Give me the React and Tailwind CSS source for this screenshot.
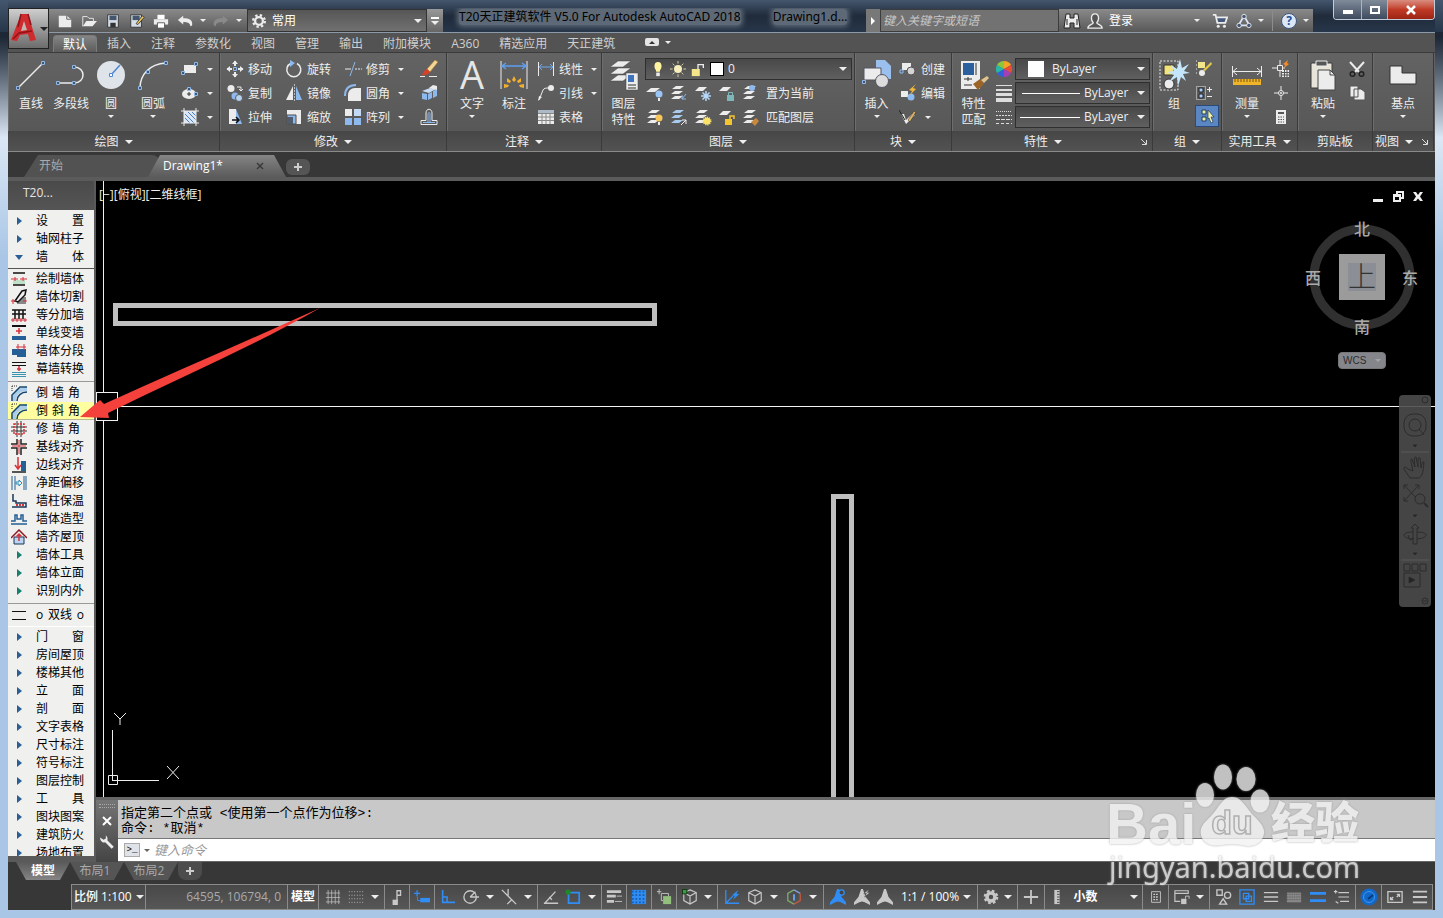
import clsx from 'clsx'

const B = '#8db9ee'
const W = '#ececec'

/* ---------- 18px ribbon icons ---------- */
const small = {
  rect: (
    <>
      <path d="M3 5h12v8H3z" fill={W} />
      <path d="M.5 11.500h3v3h-3zM13.500 2.500h3v3h-3z" fill="#44566e" stroke={B} />
    </>
  ),
  ellipse: (
    <>
      <ellipse cx="8" cy="10" rx="7" ry="5" fill={W} />
      <path d="M6 10h4M8 8v4" stroke="#333" />
      <path d="M6.500 3.500h3v3h-3zM13.500 8.500h3v3h-3z" fill="#44566e" stroke={B} />
    </>
  ),
  hatch: (
    <>
      <path d="M3 3h12v12H3z" fill="#dbe7f6" />
      <path d="m4 10 6 6M4 6l9 9M7 4l8 8M11 4l4 4" stroke="#4b7fc4" />
      <path d="M3 0v18M15 0v18M0 3h18M0 15h18" stroke={W} />
    </>
  ),
  move: (
    <>
      <path d="M9 1v5M9 12v5M1 9h5M12 9h5" stroke={W} strokeWidth="2" />
      <path d="m6 4 3-3.500L12 4zM6 14l3 3.500 3-3.500zM4 6 .5 9 4 12zM14 6l3.500 3-3.500 3z" fill={W} />
      <path d="M7.500 7.500h3v3h-3z" stroke={B} fill="none" />
    </>
  ),
  copy: (
    <>
      <circle cx="5" cy="4.500" r="3.500" fill={W} />
      <path d="M11 3h4v3m-2-1 2 2 2-2" stroke={W} fill="none" />
      <circle cx="9" cy="12" r="3.500" fill={B} />
      <circle cx="13" cy="14" r="3.500" fill="#b8d2f0" stroke="#5c5c5c" />
    </>
  ),
  stretch: (
    <>
      <path d="M3 1h7v15H3z" fill={W} />
      <path d="m10 1 6 15h-6z" fill={B} />
      <path d="M6 12h7m-3-3 3 3-3 3" stroke="#111" strokeWidth="1.500" fill="none" />
    </>
  ),
  rotate: (
    <>
      <path d="M12 3.500a7 7 0 1 1-6-.2" stroke={W} strokeWidth="1.500" fill="none" />
      <path d="m5 0 5 3-5 4z" fill={B} />
    </>
  ),
  mirror: (
    <>
      <path d="M8 2v14H1z" fill={W} />
      <path d="M11 2v14h6z" fill={B} />
      <path d="M9.500 0v18" stroke="#bbb" strokeDasharray="2 1" />
    </>
  ),
  scale: (
    <>
      <path d="M2 2h14v14H2z" fill={W} />
      <path d="M2 7h9v9H2z" fill={B} stroke="#4d4d4d" />
      <path d="M2 9h6v7H2z" fill="#505c6b" />
    </>
  ),
  trim: (
    <>
      <path d="M1 9h6" stroke={W} />
      <path d="M11 9h7" stroke={W} strokeDasharray="2 1" />
      <path d="m11 2-5 14" stroke={B} />
    </>
  ),
  fillet: (
    <>
      <path d="M4 17V11c0-4 3-7 7-7h6v13z" fill={W} />
      <path d="M1 12C1 5 5 1 12 1" stroke={B} strokeWidth="2" fill="none" />
    </>
  ),
  array: (
    <>
      <path d="M1 1h7v7H1zM1 10h7v7H1zM10 10h7v7h-7z" fill={B} />
      <path d="M1 1h7v7H1z" fill={W} />
      <path d="M10 1h7v7h-7z" fill="#c3d9f4" />
    </>
  ),
  erase: (
    <>
      <path d="M0 16.500h5M9 16.500h8" stroke={W} />
      <path d="m7 9 8-9 3 2-8 10z" fill="#f3d79a" stroke="#b07a2a" strokeWidth=".7" />
      <path d="M7 9c-3 1-4 4-5 6 3 1 7-1 8-3z" fill="#d8402c" />
    </>
  ),
  explode: (
    <>
      <path d="m2 7 8-3 6 1-7 4z" fill="#c9dcf3" />
      <path d="m2 9 5 1v6l-5-1zM8 10l4-2v6l-4 2zM13 7l4-2v7l-4 2z" fill={B} />
      <path d="m9 4 4-3 4 1v4z" fill={W} />
    </>
  ),
  offset: (
    <>
      <path d="M1 16.500h16v-4h-5V5c0-5-6-5-6 0v7.500H1z" fill="none" stroke={W} />
      <path d="M3 14.500h12M8 14V6c0-2 2-2 2 0v8" fill="none" stroke={B} />
    </>
  ),
  linear: (
    <>
      <path d="M1.500 2v14M16.500 2v14" stroke={W} />
      <path d="M2 7h14M5 4 2 7l3 3M13 4l3 3-3 3" stroke="#6fa8f0" fill="none" />
    </>
  ),
  leader: (
    <>
      <path d="M2 16 6 6c1-2 3-2 6-2" stroke={W} fill="none" />
      <path d="m1 17 1-5 3 1z" fill={W} />
      <circle cx="14" cy="4" r="3" fill={W} />
    </>
  ),
  table: (
    <>
      <path d="M1 2h16v14H1z" fill={W} />
      <path d="M1 2h16v3H1z" fill="#aeb9c8" />
      <path d="M1 5.500h16M1 9h16M1 12.500h16M5 5v11M9 5v11M13 5v11" stroke="#888" />
    </>
  ),
  binoc: <path d="M3 2h4v4h4V2h4l2 14h-6v-5H7v5H1zM4 7v6m10-6v6" fill={W} stroke="#222" />,
  create: (
    <>
      <path d="M3 3h9v7H3z" fill={W} />
      <circle cx="12" cy="11" r="4" fill="#d5d5d5" stroke="#555" />
      <path d="M1 10h3v3H1z" fill="none" stroke={B} />
    </>
  ),
  edit: (
    <>
      <path d="M2 7h7v6H2z" fill={W} />
      <circle cx="12" cy="13" r="3.500" fill={B} />
      <path d="m17 0-7 6 3 1-2 4 6-6-3-1z" fill="#f0b63a" />
    </>
  ),
  attr: (
    <>
      <path d="m2 6 5 10 9-9-3-1-6 6-2-6z" fill={W} />
      <path d="m0 2 6 10" stroke="#222" />
      <path d="m9 12 6-9 2 1-6 10z" fill="#e2b365" stroke="#222" strokeWidth=".5" />
    </>
  ),
  wheel: (
    <>
      <path d="M9 9V1a8 8 0 0 1 7 4z" fill="#f5a623" />
      <path d="M9 9 16 5a8 8 0 0 1 0 8z" fill="#e94b35" />
      <path d="m9 9 7 4a8 8 0 0 1-7 4z" fill="#a340b8" />
      <path d="M9 9v8a8 8 0 0 1-7-4z" fill="#2f62d9" />
      <path d="m9 9-7 4a8 8 0 0 1 0-8z" fill="#29b6a5" />
      <path d="M9 9 2 5a8 8 0 0 1 7-4z" fill="#8cc63e" />
    </>
  ),
  weights: <path d="M1 1h16v1H1zM1 5h16v2H1zM1 9h16v3H1zM1 14h16v4H1z" fill="#ddd" />,
  types: (
    <g stroke="#ddd">
      <path d="M1 3.500h16" strokeDasharray="1 1" />
      <path d="M1 7.500h16" strokeDasharray="2 1" />
      <path d="M1 11.500h16" strokeDasharray="4 1" />
      <path d="M1 15.500h16" strokeDasharray="3 2" />
    </g>
  ),
  groupEdit: (
    <>
      <path d="M3 2h7v6H3z" fill="#f2e68a" />
      <circle cx="7" cy="13" r="3" fill={W} />
      <path d="m8 10 8-8 1 2-7 7z" fill="#e6c94a" />
      <path d="M1 1h1M1 5h1M1 9h1M1 13h1" stroke={W} />
    </>
  ),
  groupAdd: (
    <>
      <path d="M1.500 2.500h9v13h-9z" fill="none" stroke={W} strokeDasharray="1 1" />
      <path d="M4 4h4v4H4zM4 10h4v4H4z" fill="#a8ccf6" stroke="#222" />
      <path d="M12 5.500h5m-2.500-2.500v5M12 12.500h5" stroke={W} />
    </>
  ),
  groupSel: (
    <>
      <path d="M4 3h4v4H4zM4 10h4v4H4z" fill="#e8f2a0" stroke="#1f3b5c" />
      <path d="m10 3 6 7h-3l2 5-2 1-2-5-1 1z" fill="#f5f5a8" stroke="#1f3b5c" strokeWidth=".7" />
    </>
  ),
  quick: (
    <>
      <path d="M5.500 5.500h5v5h-5zM8 0v5m0 6v6M0 8h5m6 0h2" stroke={W} fill="none" />
      <path d="m16 0-5 4 2 1-1 3 5-4-2-1z" fill="#f28c28" />
      <path d="M10 10h7v7h-7z" fill={W} />
      <path d="M10 12.500h7M10 15h7M12.500 10v7M15 10v7" stroke="#555" />
    </>
  ),
  point: (
    <>
      <path d="M9 2v14M2 9h14" stroke={W} />
      <circle cx="9" cy="9" r="2.500" fill="#5c5c5c" stroke={W} />
      <circle cx="9" cy="9" r="1" fill={W} />
    </>
  ),
  calc: (
    <>
      <path d="M4 2h10v14H4z" fill={W} />
      <path d="M6 4h6v2H6z" fill="#555" />
      <path d="M6 9h6M6 11.500h6M6 14h6" stroke="#555" strokeDasharray="1.500 1" />
    </>
  ),
  cut: (
    <>
      <path d="m2 2 9 10M16 2 7 12" stroke={W} strokeWidth="2" />
      <circle cx="4.500" cy="14" r="2.300" stroke="#222" strokeWidth="1.500" fill="none" />
      <circle cx="13.500" cy="14" r="2.300" stroke="#222" strokeWidth="1.500" fill="none" />
    </>
  ),
  copyClip: <path d="M2 2h8v11H2zM6 5h7l4 3v8H6z" fill={W} stroke="#555" />,
}

const stack = 'M6 2h8l-4 3H2zM5 7h8l-4 3H1zM5 12h8l-4 3H1z'
const layerIcons = [
  [
    <><path d="M5 4h9l-5 4H0z" fill={W} /><circle cx="13" cy="10" r="3.500" fill="#9ac6f5" /><path d="M12 14h2v3h-2z" fill={W} /></>,
    <><path d={stack} fill={W} /><path d="m16 10-4 5m0-4v4h4" stroke={B} fill="none" /></>,
    <><path d="M5 3h8l-4 4H1z" fill={W} /><path d="M12 7v10M7 12h10M8.500 8.500l7 7m0-7-7 7" stroke="#b5d8fa" strokeWidth="1.500" /></>,
    <><path d="M5 3h8l-4 4H1z" fill={W} /><path d="M9 11h7v6H9z" fill="#7fb6b8" /><path d="M10.500 11V8.500h4V11" stroke="#7fb6b8" fill="none" /></>,
    <><path d={stack} fill={W} /><circle cx="10" cy="4" r="3" fill={B} /></>,
  ],
  [
    <><path d={stack} fill={W} /><circle cx="13" cy="10" r="3.500" fill="#f7c65a" /><path d="M12 14h2v3h-2z" fill={W} /></>,
    <><path d={stack} fill="#a9caef" /><path d="m11 17 5-5m-4 0h4v4" stroke={W} fill="none" /></>,
    <><path d={stack} fill={W} /><circle cx="13" cy="13" r="3.500" fill="#fbe36a" stroke="#fbe36a" strokeDasharray="1 1" strokeWidth="2" /></>,
    <><path d="M5 3h8l-4 4H1z" fill={W} /><path d="M7 11h7v6H7z" fill="#f5c530" /><path d="M12 11V8h4v3" stroke="#f5c530" strokeWidth="1.500" fill="none" /></>,
    <><path d={stack} fill={W} /><path d="m9 14 5-4 3 3-4 5z" fill="#c8893f" /></>,
  ],
]

/* ---------- 32px ribbon icons ---------- */
const node = (x, y) => <path d={`M${x - 1.5} ${y - 1.5}h3v3h-3z`} fill="#44566e" stroke={B} />
const big = {
  line: <><path d="M3 29 28 4" stroke={W} strokeWidth="1.500" />{node(3, 29)}{node(28, 4)}</>,
  pline: <><path d="M3 24h16c12 0 12-16 0-16" stroke={W} strokeWidth="1.500" fill="none" />{node(3, 24)}{node(19, 24)}{node(19, 8)}</>,
  circle: (
    <>
      <circle cx="16" cy="16" r="14" fill="#dfe4ea" />
      <path d="m16 16 9-10" stroke="#4e86cf" strokeWidth="1.500" />
      <path d="M14.500 14.500h3v3h-3z" fill="#fff" stroke="#4e86cf" />
    </>
  ),
  arc: <><path d="M3 29C3 16 12 5 29 4" stroke={W} strokeWidth="1.500" fill="none" />{node(3, 29)}{node(11, 13)}{node(29, 4)}</>,
  text: <text x="16" y="30" fontSize="38" textAnchor="middle" fill="#e6e6e6" className="font-['Open_Sans',sans-serif]">A</text>,
  dim: (
    <>
      <path d="M3 2v28M29 2v28" stroke={W} />
      <path d="M4 7h24M8 4 4 7l4 3M24 4l4 3-4 3" stroke="#5f9df0" strokeWidth="1.500" fill="none" />
      <g fill="#f3b02e">
        <path d="m16 17 2 4-2 2-2-2zM9 19l4 3-1 2-3-1zM23 19l-4 3 1 2 3-1zM6 25l5 1-1 2-4 1zM26 25l-5 1 1 2 4 1z" />
      </g>
    </>
  ),
  layers: (
    <>
      <path d="M10 2h13l-8 6H2zM10 9h13l-8 6H2zM10 16h13l-8 6H2z" fill={W} stroke="#444" strokeWidth=".5" />
      <path d="M18 14h12v17H18z" fill={W} stroke="#444" strokeWidth=".5" />
      <path d="M20 16h6v7h-6z" fill="#3f73bd" />
      <path d="M20 26h8M20 29h8" stroke="#333" />
    </>
  ),
  insert: (
    <>
      <path d="M15 1h9l6 6v13H15z" fill="#9bc0ee" />
      <path d="M3 9h17v12H3z" fill={W} stroke="#556" />
      <circle cx="21" cy="22" r="6.500" fill="#dcdcdc" stroke="#556" />
      {node(3, 23)}
    </>
  ),
  match: (
    <>
      <path d="M3 2h19v28H3z" fill={W} />
      <path d="M5 4h11v12H5z" fill="#2c5f9e" />
      <path d="M18 4v12M6 20h8M6 26h8M10 18v4" stroke="#333" />
      <path d="m15 25 7-5 4 5-6 6z" fill="#9b6428" />
      <path d="m23 21 6-4 2 2-5 5z" fill="#e3c48e" />
    </>
  ),
  group: (
    <>
      <path d="M2 2h18v29H2z" fill="none" stroke={W} strokeDasharray="2 1.500" />
      <path d="M6 6h10v10H6z" fill="#f3e37a" stroke="#333" />
      <circle cx="11" cy="25" r="5" fill={W} stroke="#333" />
      <path d="m22 0 2 9 7-4-5 7 6 2-7 1 3 7-5-4-3 9-1-9-8 5 5-7-7-3 7-1-3-6 6 4z" fill="#c4e6fb" />
    </>
  ),
  measure: (
    <>
      <path d="M1.500 7v11M30.500 7v11M2 12.500h28M6 9l-4 3.500L6 16M26 9l4 3.500-4 3.500" stroke={W} fill="none" />
      <path d="M2 20h28v6H2z" fill="#f0b429" />
      <path d="M4 20v3M7 20v3M10 20v3M13 20v3M16 20v3M19 20v3M22 20v3M25 20v3M28 20v3" stroke="#7a5310" />
    </>
  ),
  paste: (
    <>
      <path d="M4 4h21v25H4z" fill="#e9e4da" stroke="#3b3b3b" />
      <path d="M9 2h11v5H9z" fill="#555" stroke={W} />
      <path d="M11 11h12l5 5v15H11z" fill={W} stroke="#444" />
      <path d="M23 11v5h5" fill="none" stroke="#444" />
    </>
  ),
  base: <path d="M3 7h12v7h14v11H3z" fill={W} stroke="#333" />,
}

function Svg({ size = 18, box = size, className, children }) {
  return (
    <svg width={size} height={size} viewBox={`0 0 ${box} ${box}`} className={clsx('shrink-0', className)} aria-hidden="true">
      {children}
    </svg>
  )
}

function Caret({ sm }) {
  return (
    <i
      className={clsx(
        'inline-block h-0 w-0 shrink-0 border-x-transparent border-t-[#eee]',
        sm ? 'border-x-[3px] border-t-[3px]' : 'border-x-4 border-t-4'
      )}
    />
  )
}

function Big({ icon, label, second, arrow, width = 'w-10' }) {
  return (
    <button className={clsx('flex shrink-0 flex-col items-center pt-0.5 leading-4', width)}>
      <Svg size={32}>{big[icon]}</Svg>
      <span className="mt-[5px] whitespace-nowrap">{label}</span>
      {second && <span>{second}</span>}
      {arrow && <span className="flex h-2 items-center"><Caret sm /></span>}
    </button>
  )
}

function Small({ icon, label, arrow, name, active }) {
  return (
    <button
      aria-label={label || name}
      className={clsx(
        'flex items-center gap-1 whitespace-nowrap',
        active ? 'h-[22px] w-6 justify-center border border-[#2a4b7a] bg-[#5b86c4]' : 'h-6'
      )}
    >
      <Svg>{small[icon]}</Svg>
      {label && <span className="pt-px">{label}</span>}
      {arrow && <span className="ml-1 flex"><Caret sm /></span>}
    </button>
  )
}

function Panel({ title, width, arrow = true, corner, children }) {
  return (
    <section className={clsx('flex flex-col border-r border-[#3a3a3a] shadow-[inset_1px_0_0_#6d6d6d]', width)}>
      <div className="flex h-[78px] pt-1">{children}</div>
      <div className="flex h-5 items-center justify-center gap-1.5 bg-linear-to-b from-[#474747] to-[#525252] pt-px">
        <span className={corner ? 'ml-auto' : ''}>{title}</span>
        {arrow && <Caret />}
        {corner && (
          <Svg size={8} className="mr-1 ml-auto">
            <path d="m1 1 5 5M6.500 2v4.500H2" stroke="#ddd" fill="none" />
          </Svg>
        )}
      </div>
    </section>
  )
}

function Combo({ label, value, children, pad }) {
  return (
    <label className="flex h-[22px] items-center gap-1 border border-[#2f2f2f] bg-linear-to-b from-[#484848] to-[#606060] px-1">
      {children}
      <select aria-label={label} className={clsx('min-w-0 flex-1 appearance-none bg-transparent outline-none', pad)}>
        <option>{value}</option>
      </select>
      <Caret />
    </label>
  )
}

/* ---------- title bar ---------- */
const quickAccess = [
  ['新建', <><path d="M2 3h9l5 4v9H2z" fill={W} /><path d="M11 3v4h5" stroke="#555" fill="none" /></>],
  ['打开', <><path d="M2 15V4h5l2 2h5v3" stroke={W} fill="none" /><path d="M2 15 6 9h12l-5 6z" fill={W} /></>],
  ['保存', <><path d="M3 2h12v14H3z" fill="#d5dde6" stroke="#333" /><path d="M5 3h8v5H5z" fill="#43566d" /><path d="M6 11h6v5H6z" fill="#333" /></>],
  ['另存为', <><path d="M2 2h12v14H2z" fill="#d5dde6" stroke="#333" /><path d="M4 3h8v5H4z" fill="#43566d" /><path d="m8 12 7-9 2 2-7 8z" fill="#f0c65b" stroke="#333" /></>],
  ['打印', <><path d="M5 2h8v5H5z" fill="#fff" /><path d="M1 7h16v6H1z" fill={W} /><path d="M5 11h8v6H5z" fill="#fff" stroke="#555" /></>],
  ['放弃', <path d="M7 3 1 8l6 5v-3c5 0 8 1 8 5l2-1c1-6-3-8-10-8z" fill={W} />],
  ['重做', <path d="m11 3 6 5-6 5v-3c-5 0-8 1-8 5l-2-1c-1-6 3-8 10-8z" fill="#8a8a8a" />],
]

function TitleBar() {
  return (
    <header className="flex h-8 shrink-0 items-end bg-linear-to-b from-[#44576e] via-[#202b3b] to-[#27364a] pl-[41px] text-white">
      <div className="flex h-[23px] w-[198px] items-center bg-linear-to-b from-[#8a8a8a] to-[#585858] pl-1">
        {quickAccess.map(([name, art], i) => (
          <span key={name} className="flex items-center">
            <button aria-label={name} className="flex w-6 justify-center"><Svg size={16} box={18}>{art}</Svg></button>
            {i > 4 && <span className="flex w-3 justify-center"><Caret sm /></span>}
          </span>
        ))}
      </div>
      <label className="flex h-[23px] w-[180px] items-center gap-1.5 border border-[#333] bg-linear-to-b from-[#565656] to-[#717171] px-1">
        <Svg size={14} box={18}>
          <circle cx="9" cy="9" r="5" fill="none" stroke={W} strokeWidth="3" />
          <circle cx="9" cy="9" r="7.500" fill="none" stroke={W} strokeWidth="3" strokeDasharray="3 2.900" />
        </Svg>
        <select aria-label="工作空间" className="min-w-0 flex-1 appearance-none bg-transparent outline-none">
          <option>常用</option>
        </select>
        <Caret />
      </label>
      <button aria-label="自定义" className="flex h-[23px] w-4 flex-col items-center justify-center gap-0.5 bg-linear-to-b from-[#999] to-[#666]">
        <i className="h-0.5 w-2 bg-white" />
        <Caret />
      </button>
      <h1 className="flex h-6 min-w-0 flex-1 items-start gap-8 overflow-hidden pt-px pl-4 font-['Noto_Sans','Noto_Sans_CJK_SC',sans-serif] whitespace-nowrap text-black">
        <span className="rounded bg-[#5d6976] leading-4 shadow-[0_0_5px_2px_#5d6976]">T20天正建筑软件 V5.0 For Autodesk AutoCAD 2018</span>
        <span className="rounded bg-[#5d6976] leading-4 shadow-[0_0_5px_2px_#5d6976]">Drawing1.d...</span>
      </h1>
      <button aria-label="展开" className="flex h-[23px] w-3.5 items-center justify-center bg-[#787878]">
        <i className="border-y-4 border-l-4 border-y-transparent border-l-white" />
      </button>
      <input
        aria-label="搜索"
        placeholder="键入关键字或短语"
        className="h-[23px] w-[179px] border border-[#3c3c3c] bg-[#727272] px-0.5 italic outline-none placeholder:text-[#c8c8c8]"
      />
      <div className="flex h-[23px] w-[254px] items-center bg-linear-to-b from-[#8a8a8a] to-[#585858] pl-1">
        <button aria-label="查找"><Svg size={18}>{small.binoc}</Svg></button>
        <button className="ml-1.5 flex items-center gap-1.5">
          <Svg size={16} box={18}>
            <path d="M9 1c3 0 4 2 4 5 0 2-1 4-2 5 0 2 6 2 6 6H1c0-4 6-4 6-6-1-1-2-3-2-5 0-3 1-5 4-5z" fill="#555" stroke={W} strokeWidth="1.500" />
          </Svg>
          登录
        </button>
        <span className="ml-auto flex"><Caret sm /></span>
        <button aria-label="商店" className="ml-3">
          <Svg size={16} box={18}>
            <path d="M1 2h3l2 9h9l2-6H5" stroke={W} strokeWidth="2" fill="#46597a" />
            <circle cx="7" cy="15" r="1.700" fill={W} /><circle cx="14" cy="15" r="1.700" fill={W} />
          </Svg>
        </button>
        <button aria-label="应用" className="ml-2 flex items-center gap-1.5">
          <Svg size={16} box={18}>
            <path d="M9 3 3 14h12z" fill="none" stroke="#dbe5f5" strokeWidth="2" />
            <circle cx="9" cy="4" r="2.500" fill="#46597a" stroke={W} /><circle cx="3.500" cy="14" r="2.500" fill="#46597a" stroke={W} /><circle cx="14.500" cy="14" r="2.500" fill="#46597a" stroke={W} />
          </Svg>
          <Caret sm />
        </button>
        <i className="mx-2 h-5 w-px bg-[#8d8d8d]" />
        <button aria-label="帮助" className="mr-1 flex items-center gap-1.5">
          <span className="flex size-4 items-center justify-center rounded-full border border-[#3d567d] bg-[#dce7f5] text-[12px] leading-3 font-bold text-[#23529a]">?</span>
          <Caret sm />
        </button>
      </div>
      <div className="mb-3 ml-5 flex h-5 shrink-0 overflow-hidden rounded-b border border-t-0 border-[#c3ccd8] text-white">
        <button aria-label="最小化" className="flex w-7 items-center justify-center border-r border-[#aab4c2] bg-linear-to-b from-[#808b9a] to-[#3e4b5e]"><i className="mt-1 h-1 w-2.5 bg-white" /></button>
        <button aria-label="还原" className="flex w-[26px] items-center justify-center border-r border-[#aab4c2] bg-linear-to-b from-[#808b9a] to-[#3e4b5e]"><i className="h-2 w-2.5 border-2 border-white" /></button>
        <button aria-label="关闭" className="flex w-[46px] items-center justify-center bg-linear-to-b from-[#d98c80] via-[#c03a25] to-[#9c2314]">
          <Svg size={10}><path d="m1 1 8 8M9 1 1 9" stroke="#fff" strokeWidth="2.500" /></Svg>
        </button>
      </div>
    </header>
  )
}

const tabs = ['默认', '插入', '注释', '参数化', '视图', '管理', '输出', '附加模块', 'A360', '精选应用', '天正建筑']

function RibbonTabs() {
  return (
    <nav className="flex h-[21px] shrink-0 items-end border-t border-b border-t-[#8c99a8] border-b-[#3b3b3b] bg-[#535353] pl-[45px] text-[#cfcfcf]">
      {tabs.map((t, i) => (
        <button
          key={t}
          className={clsx('h-[17px]', i === 0 ? 'rounded-t-sm border border-b-0 border-[#7b7b7b] bg-linear-to-b from-[#858585] to-[#5c5c5c] px-[9px] leading-[15px] text-white' : 'px-2.5 leading-4')}
        >
          {t}
        </button>
      ))}
      <button aria-label="折叠功能区" className="mb-1.5 ml-5 flex items-center gap-1.5">
        <span className="flex h-2 w-3.5 items-center justify-center rounded-xs bg-[#e5e5e5]"><i className="border-x-[3px] border-b-[3px] border-x-transparent border-b-[#333]" /></span>
        <Caret sm />
      </button>
    </nav>
  )
}

function Ribbon() {
  return (
    <div className="flex h-[99px] shrink-0 overflow-hidden border-b border-[#8a8a8a] bg-linear-to-b from-[#636363] to-[#555] text-[#eee] [&>section]:shrink-0">
      <Panel title="绘图" width="w-[212px]">
        <div className="flex pl-[3px]">
          <Big icon="line" label="直线" />
          <Big icon="pline" label="多段线" />
          <Big icon="circle" label="圆" arrow />
          <Big icon="arc" label="圆弧" arrow width="w-11" />
        </div>
        <div className="ml-1.5">
          <Small icon="rect" name="矩形" arrow />
          <Small icon="ellipse" name="椭圆" arrow />
          <Small icon="hatch" name="图案填充" arrow />
        </div>
      </Panel>
      <Panel title="修改" width="w-[227px]">
        <div className="w-[65px] pl-1.5">
          <Small icon="move" label="移动" />
          <Small icon="copy" label="复制" />
          <Small icon="stretch" label="拉伸" />
        </div>
        <div className="w-[59px]">
          <Small icon="rotate" label="旋转" />
          <Small icon="mirror" label="镜像" />
          <Small icon="scale" label="缩放" />
        </div>
        <div className="w-[76px]">
          <Small icon="trim" label="修剪" arrow />
          <Small icon="fillet" label="圆角" arrow />
          <Small icon="array" label="阵列" arrow />
        </div>
        <div>
          <Small icon="erase" name="删除" />
          <Small icon="explode" name="分解" />
          <Small icon="offset" name="偏移" />
        </div>
      </Panel>
      <Panel title="注释" width="w-[155px]">
        <div className="flex pl-1">
          <Big icon="text" label="文字" arrow width="w-[42px]" />
          <Big icon="dim" label="标注" width="w-[42px]" />
        </div>
        <div className="pl-0.5">
          <Small icon="linear" label="线性" arrow />
          <Small icon="leader" label="引线" arrow />
          <Small icon="table" label="表格" />
        </div>
      </Panel>
      <Panel title="图层" width="w-[253px]">
        <Big icon="layers" label="图层" second="特性" width="w-[43px]" />
        <div className="flex-1 pr-0.5">
          <div className="h-6 pt-px">
            <Combo label="图层" value="0">
              <Svg size={16} box={18}><path d="M5 6a4 5 0 0 1 8 0c0 3-2 4-2 6H7c0-2-2-3-2-6z" fill="#fff3a0" /><path d="M7 13h4v4H7z" fill={W} /></Svg>
              <Svg size={16} box={18}><circle cx="9" cy="9" r="4.500" fill="#f6eebc" /><path d="M9 0v3M9 15v3M0 9h3M15 9h3M3 3l2 2M13 13l2 2M15 3l-2 2M5 13l-2 2" stroke="#e6dcae" /></Svg>
              <Svg size={16} box={18}><path d="M2 9h9v8H2z" fill="#f5e58a" /><path d="M9 9V4h6v4" stroke={W} strokeWidth="1.500" fill="none" /></Svg>
              <i className="size-3.5 border border-black bg-white" />
            </Combo>
          </div>
          {layerIcons.map((row, r) => (
            <div key={r} className="flex h-6 items-center gap-1.5 pl-px">
              {row.map((art, i) => (
                <button key={i} aria-label={`图层工具 ${r * 5 + i + 1}`} className="shrink-0"><Svg>{art}</Svg></button>
              ))}
              <span className="pt-px">{r === 0 ? '置为当前' : '匹配图层'}</span>
            </div>
          ))}
        </div>
      </Panel>
      <Panel title="块" width="w-[97px]">
        <Big icon="insert" label="插入" arrow width="w-[43px]" />
        <div className="pl-px">
          <Small icon="create" label="创建" />
          <Small icon="edit" label="编辑" />
          <Small icon="attr" name="属性" arrow />
        </div>
      </Panel>
      <Panel title="特性" width="w-[201px]" corner>
        <Big icon="match" label="特性" second="匹配" width="w-[43px]" />
        <div className="w-5">
          <Small icon="wheel" name="颜色" />
          <Small icon="weights" name="线宽" />
          <Small icon="types" name="线型" />
        </div>
        <div className="flex-1 space-y-0.5 pt-px pr-0.5">
          <Combo label="对象颜色" value="ByLayer" pad="pl-1"><i className="ml-2 size-4 bg-white" /></Combo>
          <Combo label="对象线宽" value="ByLayer"><i className="ml-0.5 h-px w-[58px] bg-white" /></Combo>
          <Combo label="对象线型" value="ByLayer"><i className="h-px w-[60px] bg-white" /></Combo>
        </div>
      </Panel>
      <Panel title="组" width="w-[69px]">
        <Big icon="group" label="组" width="w-[42px]" />
        <div>
          <Small icon="groupEdit" name="组编辑" />
          <Small icon="groupAdd" name="添加到组" />
          <Small icon="groupSel" name="组选择" active />
        </div>
      </Panel>
      <Panel title="实用工具" width="w-[76px]">
        <Big icon="measure" label="测量" arrow width="w-[50px]" />
        <div>
          <Small icon="quick" name="快速选择" />
          <Small icon="point" name="点坐标" />
          <Small icon="calc" name="计算器" />
        </div>
      </Panel>
      <Panel title="剪贴板" width="w-[75px]" arrow={false}>
        <Big icon="paste" label="粘贴" arrow width="w-[50px]" />
        <div>
          <Small icon="cut" name="剪切" />
          <Small icon="copyClip" name="复制剪裁" />
        </div>
      </Panel>
      <Panel title="视图" width="w-[61px]" corner>
        <Big icon="base" label="基点" arrow width="w-full" />
      </Panel>
    </div>
  )
}

function DocTabs() {
  return (
    <div className="flex h-[29px] shrink-0 items-end border-b-4 border-[#5b5b5b] bg-[#373737] pl-4">
      <button className="-mr-3 h-[22px] w-[136px] rounded-t-lg bg-[#525252] pl-[15px] text-left text-[#aaa] [clip-path:polygon(0_100%,14px_0,100%_0,100%_100%)]">开始</button>
      <div className="flex h-[22px] w-[138px] items-center justify-between rounded-t-lg bg-linear-to-b from-[#858585] to-[#5b5b5b] pr-[22px] pl-[15px] text-white [clip-path:polygon(0_100%,12px_0,calc(100%_-_12px)_0,100%_100%)]">
        <button>Drawing1*</button>
        <button aria-label="关闭图形">
          <Svg size={8}><path d="m1 1 6 6M7 1 1 7" stroke="#3a3a3a" strokeWidth="1.500" /></Svg>
        </button>
      </div>
      <button aria-label="新图形" className="mb-0.5 flex h-4 w-6 items-center justify-center rounded-md bg-[#555]">
        <Svg size={8}><path d="M4 0v8M0 4h8" stroke="#ccc" strokeWidth="2" /></Svg>
      </button>
    </div>
  )
}

/* ---------- side palette, 16px glyphs ---------- */
const P = '#245f95'
const R = '#d6303a'
const wallIcons = {
  绘制墙体: <><path d="M2 2h12M2 14h12" stroke="#111" strokeWidth="1.500" /><path d="M2 9h12v4H2z" fill="#bfe0c8" /><path d="M0 8h7M9 8h7M4 6v4M12 6v4" stroke={R} /></>,
  墙体切割: <><path d="M6 8h9v7H6z" fill="#888" /><path d="M4 12 11 2l4-1-1 5-7 7z" fill="#eee" stroke="#111" strokeWidth="1.500" /><path d="M0 12h5M2 10v5M12 12h4" stroke={R} /></>,
  等分加墙: <><path d="M1 3h14M4 3v9M8 3v9M12 3v9M1 7h14" stroke="#111" strokeWidth="1.500" /><path d="M0 13h16M2 11v4M6 11v4M10 11v4M14 11v4" stroke={R} /></>,
  单线变墙: <><path d="M1 1h14" stroke="#111" strokeWidth="2" /><path d="M8 3v6M5 6h6" stroke={R} strokeWidth="1.500" /><path d="M1 11h14v4H1z" fill={P} /></>,
  墙体分段: <><path d="M1 6h14v8H6v-2H1z" fill={P} /><path d="M5 4h10M7 1v6M13 1v6" stroke={R} /></>,
  幕墙转换: <><path d="M1 1.500h14M1 4.500h14" stroke="#111" /><path d="M8 5v5M6 8h4" stroke={R} strokeWidth="1.500" /><path d="M1 11.500h14M1 13.500h14M1 15.500h14" stroke="#3b93ad" /></>,
  倒墙角: <><path d="M3 16C3 9 7 4 16 4" stroke="#a9cdea" strokeWidth="4" fill="none" /><path d="M1 16V10l8-8h7M6 16c0-5 4-9 10-9" stroke="#17456e" strokeWidth="1.500" fill="none" /><path d="M1 1h5M1 1v5" stroke="#333" strokeDasharray="1 1" /></>,
  修墙角: <><path d="M6 0v16M10 0v16M0 6h16M0 10h16" stroke="#333" /><path d="M3 3h10v10H3z" fill="none" stroke={R} strokeWidth="1.500" strokeDasharray="2 1" /></>,
  基线对齐: <><path d="M6 0v5H0M10 0v5h6M0 9h6v7M16 9h-6v7" stroke="#222" strokeWidth="1.500" fill="none" /><path d="M8 1v14M1 7h14" stroke={R} /></>,
  边线对齐: <><path d="M1 15h14" stroke="#555" strokeWidth="2" /><path d="M10 4h5v10h-5z" fill={P} /><path d="M7 0v11M4 8l3 4 3-4" stroke={R} strokeWidth="1.500" fill="none" /></>,
  净距偏移: <><path d="M1 1v14M4 1v14M13 1v14M15 1v14" stroke={P} /><path d="M5 7h3V5l3 3-3 3V9H5z" stroke="#2d8bb5" fill="none" /></>,
  墙柱保温: <><path d="M2 1v7h3v2h10v4H1" stroke="#17375a" strokeWidth="1.500" fill="none" /><path d="M5 12h10" stroke={R} strokeWidth="2" strokeDasharray="2 1" /></>,
  墙体造型: <path d="M0 13h16M0 10h4V4h2v4h4V4h2v6h4" stroke={P} strokeWidth="1.500" fill="none" />,
  墙齐屋顶: <><path d="M3 8h10v7H3z" fill="#bcd4f0" stroke="#17375a" /><path d="M0 9 8 1l8 8" stroke="#8c1a22" strokeWidth="1.500" fill="none" /><path d="M8 12V5M5.500 7.500 8 5l2.500 2.500" stroke={R} strokeWidth="1.500" fill="none" /></>,
  双线: <path d="M1 4.500h14M1 12.500h14" stroke="#111" />,
}
wallIcons['倒斜角'] = wallIcons['倒墙角']

const groups = [
  { items: ['设置', '轴网柱子', '墙体'], gap: 'h-1', line: 'border-[#555]' },
  { items: ['绘制墙体', '墙体切割', '等分加墙', '单线变墙', '墙体分段', '幕墙转换'], gap: 'h-1.5', line: 'border-[#999]' },
  { items: ['倒墙角', '倒斜角', '修墙角', '基线对齐', '边线对齐', '净距偏移', '墙柱保温', '墙体造型', '墙齐屋顶', '墙体工具', '墙体立面', '识别内外'], gap: 'h-1.5', line: 'border-[#999]' },
  { items: ['双线'], gap: 'h-1', line: 'border-white' },
  { items: ['门窗', '房间屋顶', '楼梯其他', '立面', '剖面', '文字表格', '尺寸标注', '符号标注', '图层控制', '工具', '图块图案', '建筑防火', '场地布置'] },
]
const teal = ['墙体工具', '墙体立面', '识别内外']

function PaletteItem({ name }) {
  let mark
  if (wallIcons[name]) mark = <Svg size={16}>{wallIcons[name]}</Svg>
  else if (name === '墙体') mark = <i className="border-x-4 border-t-[5px] border-x-transparent border-t-[#2a5f96]" />
  else mark = <i className={clsx('border-y-4 border-l-[5px] border-y-transparent', teal.includes(name) ? 'border-l-[#158070]' : 'border-l-[#2a5f96]')} />

  const chars = name === '双线' ? ['o', '双线', 'o'] : name.split('')
  return (
    <button className={clsx('flex h-[18px] w-full shrink-0 items-center', name === '倒斜角' && 'border-b border-[#b8b890] bg-[#ffffa0]')}>
      <span className="flex w-[22px] justify-center">{mark}</span>
      <span className={clsx('ml-1.5 flex justify-between leading-4', chars.length === 3 && name !== '双线' ? 'w-11' : 'w-12')}>
        {chars.map((c, i) => <span key={i}>{c}</span>)}
      </span>
    </button>
  )
}

function Palette() {
  return (
    <aside className="flex w-[88px] shrink-0 flex-col border-r-2 border-[#5a5a5a] bg-[#5a5a5a] pb-1.5">
      <h2 className="h-[29px] shrink-0 bg-linear-to-b from-[#4a4a4a] to-[#555] pl-[15px] leading-6 text-[#e5e5e5]">T20...</h2>
      <div className="flex min-h-0 flex-1 flex-col overflow-hidden bg-[#f0f0ee] pt-0.5 text-black">
        {groups.map((g, i) => (
          <div key={i} className="shrink-0">
            {g.items.map((n) => <PaletteItem key={n} name={n} />)}
            {g.gap && <div className={clsx('flex items-center', g.gap)}><i className={clsx('w-full border-t', g.line)} /></div>}
          </div>
        ))}
      </div>
    </aside>
  )
}

/* ---------- drawing area ---------- */
function NavBar() {
  return (
    <div className="absolute top-[214px] right-1 flex h-[212px] w-8 flex-col items-center rounded bg-[#4d4d4d]/90">
      <svg width="32" height="212" fill="none" stroke="#2c2c2c" aria-hidden="true">
        <circle cx="26" cy="5" r="3" />
        <rect x="5" y="19" width="22" height="22" rx="9" />
        <circle cx="16" cy="30" r="6" /><path d="m20 34 5 6" />
        <path d="M14 50h4l-2 2z" fill="#222" />
        <path d="M2 57h28M2 165h28" stroke="#5a5a5a" />
        <path d="M9 74c-3-3-5-2-4 0l6 9h9c4-3 4-6 5-16-2-1-2 2-3 6l-1-10c-2-1-2 1-2 9l-2-10c-2 0-2 2-1 10l-3-8c-2 0-1 3 1 12z" />
        <path d="m5 90 15 16M20 90 5 106M5 94v-4h4M16 90h4v4M5 102v4h4" />
        <circle cx="21" cy="104" r="5" fill="#444" /><path d="m25 108 4 4" strokeWidth="2" />
        <path d="M14 120h4l-2 2zM14 158h4l-2 2z" fill="#222" />
        <path d="M14 149v-16h-2l4-4 4 4h-2v16z" /><path d="M14 144c-12-1-12-7 0-7M18 144c12-1 12-7 0-7M9 140l2 5 4-2" />
        <path d="M5 169h6v7H5zM13 169h6v7h-6zM21 169h6v7h-6zM5 178h16v14H5z" />
        <path d="m10 182 6 3-6 3z" fill="#222" />
        <circle cx="26" cy="206" r="3" /><path d="M24 206h4" />
      </svg>
    </div>
  )
}

function Canvas() {
  return (
    <div className="relative min-h-0 flex-1 bg-black">
      <svg className="absolute inset-0 h-full w-full" fill="none" aria-hidden="true">
        <rect x="19.500" y="124.500" width="539" height="18" stroke="#bfbfbf" strokeWidth="5" />
        <path d="M737.500 700V315.500h18V700" stroke="#bfbfbf" strokeWidth="5" />
        <path d="M7.500 0v211M7.500 240v600M22 225.500h1400" stroke="#f2f2f2" />
        <rect x=".5" y="211.500" width="21" height="28" stroke="#f2f2f2" />
      </svg>
      <svg className="absolute bottom-2 left-3" width="74" height="78" fill="none" stroke="#eee" aria-hidden="true">
        <path d="M4.500 19v50M4 69.500h47M.5 64.500h9v9h-9zM6 2l6 6 6-6M12 8v6M59 55l12 13M71 55 59 68" />
      </svg>
      <svg className="pointer-events-none absolute top-0 left-0 z-10 overflow-visible" width="240" height="240" aria-hidden="true">
        <path d="m-16 236 20-17 4 4c75-34 145-64 216-96-70 40-141 70-212 105l1 5z" fill="#f5413b" />
      </svg>
      <p className="absolute top-1.5 left-[3px] text-[12px] leading-4 text-[#eee]">[−][俯视][二维线框]</p>
      <div className="absolute top-2.5 right-2.5 flex items-center gap-2">
        {['M0 8h10v3H0z', 'M3 0h8v8H8v3H0V3h3zM2 6v3h4V6zM5 2v1h3v3h1V2z', 'M0 1h3l2 3 2-3h3L7 5.500 10 10H7L5 7.500 3 10H0l3-4.500z'].map((d, i) => (
          <button key={d} aria-label={['最小化视口', '还原视口', '关闭视口'][i]}>
            <Svg size={12} box={12}><path d={d} fill="#eee" fillRule="evenodd" /></Svg>
          </button>
        ))}
      </div>
      <svg className="absolute top-[36px] right-4 font-['Noto_Sans_CJK_SC',sans-serif]" width="116" height="160" role="img" aria-label="上">
        <circle cx="59" cy="60" r="48" fill="none" stroke="#303030" strokeWidth="9" />
        <rect x="36" y="37" width="46" height="46" fill="#9b9b9b" />
        <rect x="45" y="46" width="28" height="28" fill="#8b8e94" />
        <text x="59" y="70" fontSize="28" fontWeight="300" textAnchor="middle" fill="#333">上</text>
        <g fontSize="16" fill="#aaa" fontWeight="500" textAnchor="middle">
          <text x="59" y="18">北</text>
          <text x="59" y="116">南</text>
          <text x="10" y="67">西</text>
          <text x="107" y="67">东</text>
        </g>
      </svg>
      <button className="absolute top-[171px] right-[49px] flex h-[17px] w-12 items-center justify-between rounded border border-[#777] bg-[#85868b] px-1 font-['Liberation_Sans',sans-serif] text-[10px] text-[#2d2d2d]">
        WCS
        <i className="border-x-[3px] border-t-[3px] border-x-transparent border-t-[#a5a5a8]" />
      </button>
      <NavBar />
    </div>
  )
}

function CommandLine() {
  return (
    <div className="flex h-[65px] shrink-0 border-t-[3px] border-[#666] text-black">
      <div className="flex w-[22px] shrink-0 flex-col items-center bg-linear-to-b from-[#757575] to-[#454545] pt-1">
        <i className="h-1 w-4 border-y border-dotted border-[#aaa]" />
        <button aria-label="关闭命令行" className="mt-2"><Svg size={10}><path d="m1 1 8 8M9 1 1 9" stroke="#fff" strokeWidth="2" /></Svg></button>
        <button aria-label="自定义命令行" className="mt-2">
          <Svg size={16} box={14}><path d="M12 12 5 5" stroke={W} strokeWidth="2.500" /><path d="M1 3c0 4 3 5 5 4s2-4 0-6v3L4 5z" fill={W} /></Svg>
        </button>
      </div>
      <div className="flex flex-1 flex-col">
        <div className="h-[39px] border-b border-[#777] bg-[#c8c8c8] pt-1.5 pl-[3px] font-['Liberation_Mono','Noto_Sans_CJK_SC',monospace] text-[13px] leading-[15px]">
          <p>指定第二个点或 &lt;使用第一个点作为位移&gt;:</p>
          <p>命令: *取消*</p>
        </div>
        <div className="flex flex-1 items-center gap-1 border-b border-[#666] bg-white pl-1.5">
          <button aria-label="最近的命令" className="flex items-center gap-1">
            <span className="flex h-3.5 w-4 items-center justify-center border border-[#aaa] bg-[#dfe2e8] font-['Liberation_Mono',monospace] text-[9px] leading-3">&gt;_</span>
            <i className="border-x-[3px] border-t-[3px] border-x-transparent border-t-[#666]" />
          </button>
          <input aria-label="命令" placeholder="键入命令" className="min-w-0 flex-1 text-[13px] italic outline-none placeholder:text-[#999]" />
        </div>
      </div>
    </div>
  )
}

function LayoutTabs() {
  const edge = '[clip-path:polygon(0_0,100%_0,calc(100%_-_10px)_100%,10px_100%)]'
  return (
    <div className="flex h-[22px] shrink-0 items-start bg-[#373737] pl-2 text-[#aaa]">
      <button className={clsx('h-[18px] w-[54px] bg-linear-to-b from-[#5a5a5a] to-[#858585] font-bold text-white', edge)}>模型</button>
      <button className={clsx('h-[18px] w-[54px] bg-[#555] pr-1', edge)}>布局1</button>
      <button className={clsx('h-[18px] w-[54px] bg-[#555] pr-1', edge)}>布局2</button>
      <button aria-label="新建布局" className="flex h-[18px] w-6 items-center justify-center rounded-b-lg bg-[#4c4c4c]">
        <Svg size={8}><path d="M4 0v8M0 4h8" stroke="#ccc" strokeWidth="2" /></Svg>
      </button>
    </div>
  )
}

/* ---------- status bar ---------- */
const C = '#c8c8c8'
const H = '#2f8df5'
const person = 'M8 0h2l3 9 5 6v3l-6-3-3-1-3 1-6 3v-3l5-6z'
const st = {
  grid: <path d="M3.500 1v16M7.500 1v16M11.500 1v16M15.500 1v16M1 4.500h16M1 9.500h16M1 14.500h16" stroke={C} strokeWidth=".8" />,
  snap: <path d="M1 3h16M1 7h16M1 11h16M1 15h16" stroke={C} strokeDasharray="1 2" />,
  infer: <><path d="M9 13V2h4v5H9" stroke={C} strokeWidth="1.500" fill="none" /><path d="M4 12h6v6H4z" fill={C} /></>,
  dyn: <><path d="M0 5h7M3.500 1.500v7" stroke={H} strokeWidth="1.500" /><path d="M4 9v4h3" stroke={H} fill="none" /><path d="M7 10h11v5H7z" fill={H} /></>,
  ortho: <path d="M3 1v14h14M3 9h5v6" stroke={H} strokeWidth="1.800" fill="none" />,
  polar: <><circle cx="8" cy="9" r="7" stroke={C} strokeWidth="1.500" fill="none" /><path d="M8 9h10M8 9l6-6" stroke={C} strokeWidth="1.500" /></>,
  iso: <path d="m1 1 16 16M8 0v8M12 12l-5 5" stroke={C} strokeWidth="1.500" />,
  track: <path d="M1 16h16M2 16 14 3M7 9l3 3" stroke={C} strokeWidth="1.500" fill="none" />,
  osnap: <><path d="M4 4h12v12H4z" stroke={H} strokeWidth="2" fill="none" /><circle cx="3.500" cy="3.500" r="3" fill="#1f8a2a" /></>,
  lwt: <><path d="M1 3h16M1 8h10M1 14h8" stroke={C} strokeWidth="3" /><path d="M12 8h6M10 14h8" stroke={C} /></>,
  trans: <><path d="M1 1h16v16H1z" fill={H} /><path d="M1 3h16M1 7h16M1 11h16M1 15h16" stroke="#1b5dab" strokeWidth="2" strokeDasharray="2 2" /></>,
  cycle: <><path d="M6 5h8v3M6 5v8h2" fill="none" stroke={C} /><path d="M8 8h9v9H8z" fill="#93bf7c" /><path d="M1 3h5M3.500 0v6" stroke={C} /></>,
  cube: <path d="m9 1 7 3v9l-7 4-7-4V4zM2 4l7 4 7-4M9 8v9" stroke={C} fill="none" strokeWidth="1.300" />,
  cubeSnap: <><path d="m9 1 7 3v9l-7 4-7-4V4zM2 4l7 4 7-4M9 8v9" stroke={C} fill="none" strokeWidth="1.300" /><path d="M.5.500h5v5h-5z" fill="#3d9a44" stroke="#0c2f10" /></>,
  ucs: <><path d="M2 1v15h15M2 16 10 8" stroke={H} strokeWidth="1.500" fill="none" /><path d="m16 1-7 6 3 1-2 4 7-6-3-1z" fill={H} /></>,
  gizmo: <><path d="m9 1 7 4" stroke="#7f9fd8" strokeWidth="1.500" /><path d="M16 5v8l-7 4" stroke="#c4583e" fill="none" strokeWidth="1.500" /><path d="m9 17-7-4V5l7-4" stroke="#7cab6f" fill="none" strokeWidth="1.500" /><path d="M9 6v7" stroke="#6aa9f3" strokeWidth="2" /></>,
  annoOn: <><path d={person} fill={H} /><circle cx="13" cy="4" r="3" stroke={H} strokeWidth="1.500" fill="#444" /></>,
  annoAuto: <><path d={person} fill={C} /><path d="m17 0-6 5h3l-2 4 6-5h-3z" fill={C} stroke="#444" strokeWidth=".6" /></>,
  anno: <path d={person} fill={C} />,
  gear: <><circle cx="9" cy="9" r="4.500" fill="none" stroke={C} strokeWidth="4" /><circle cx="9" cy="9" r="7" fill="none" stroke={C} strokeWidth="2.500" strokeDasharray="3 2.500" /></>,
  plus: <path d="M9 1v16M1 9h16" stroke={C} strokeWidth="2" />,
  ruler: <><path d="M6 1h6v16H6z" fill={C} /><path d="M9 3h3M9 6h3M9 9h3M9 12h3M9 15h3" stroke="#444" /></>,
  props: <><path d="M4 3h10v12H4z" fill="none" stroke={C} /><path d="M6 6h6M6 9h6M6 12h6" stroke={C} strokeDasharray="2 1" strokeWidth="1.500" /></>,
  lockUi: <><path d="M1 2h15v3H1zM1 5v9h6" fill="none" stroke={C} strokeWidth="1.300" /><path d="M8 11h6v6H8z" fill={C} /><path d="M13 11V8h4v3" stroke={C} fill="none" /></>,
  isolate: <><path d="M1 1h6v6H1zM4 17l4-6 4 6z" fill="none" stroke={C} strokeWidth="1.500" /><circle cx="13" cy="7" r="3.500" fill="none" stroke={C} strokeWidth="1.500" /></>,
  hardware: <path d="M1 1h16v16H1zM5 5h6v6H5zM8 8h6v6H8z" fill="none" stroke={H} strokeWidth="1.500" />,
  lines: <path d="M1 4h16M1 9h16M1 14h16" stroke={C} strokeWidth="1.500" />,
  fill: <><path d="M1 4h16v11H1z" fill="#888" /><path d="M1 6h16M1 9h16M1 12h16" stroke="#555" strokeDasharray="1 1" /></>,
  blue: <path d="M0 5h18M0 13h18" stroke={H} strokeWidth="3" />,
  list: <path d="M6 4h12M6 9h12M8 14h10M1 3h4M3 1v4M3 14l3 2" stroke={C} strokeWidth="1.300" />,
  clean: <path d="M1 3h16v12H1zM4 12l3-3M4 9v3h3M14 6l-3 3M11 6h3v3" fill="none" stroke={C} strokeWidth="1.500" />,
  menu: <path d="M1 3h16M1 9h16M1 15h16" stroke={C} strokeWidth="2" />,
}

// each entry: [width class, icons]; 'v' stands for a drop-down arrow
const cells = [
  ['w-[66px]', ['grid', 'snap', 'v']],
  ['w-[25px]', ['infer']],
  ['w-[25px]', ['dyn']],
  ['w-[103px]', ['ortho', 'polar', 'v', 'iso', 'v']],
  ['w-16', ['track', 'osnap', 'v']],
  ['w-[25px]', ['lwt']],
  ['w-[25px]', ['trans']],
  ['w-[25px]', ['cycle']],
  ['w-[41px]', ['cubeSnap', 'v']],
  ['w-[106px]', ['ucs', 'cube', 'v', 'gizmo', 'v']],
]

function Cell({ width, items, children }) {
  return (
    <div className={clsx('flex h-full shrink-0 items-center justify-around border-r border-[#8b8b8b] px-0.5', width)}>
      {items?.map((n, i) => n === 'v' ? <Caret key={i} /> : <button key={i} aria-label={n}><Svg size={16} box={18}>{st[n]}</Svg></button>)}
      {children}
    </div>
  )
}

function StatusBar() {
  return (
    <footer className="flex h-[26px] shrink-0 justify-end bg-[#373737] pr-0.5 text-[#ddd]">
      <div className="flex w-[1362px] border border-[#8b8b8b] bg-linear-to-b from-[#484848] to-[#575757]">
        <Cell width="w-[74px]"><button className="flex items-center gap-1 font-medium whitespace-nowrap text-white">比例 1:100 <Caret /></button></Cell>
        <div className="flex min-w-0 flex-1 items-center justify-end border-r border-[#8b8b8b] pr-1.5 whitespace-nowrap text-[#aaa]">64595, 106794, 0</div>
        <Cell width="w-[31px]"><button className="font-bold whitespace-nowrap text-white">模型</button></Cell>
        {cells.map(([w, items], i) => <Cell key={i} width={w} items={items} />)}
        <Cell width="w-[154px]" items={['annoOn', 'annoAuto', 'anno']}>
          <button className="flex items-center gap-1 text-white">1:1 / 100% <Caret /></button>
        </Cell>
        <Cell width="w-[40px]" items={['gear', 'v']} />
        <Cell width="w-[27px]" items={['plus']} />
        <Cell width="w-[98px]" items={['ruler']}>
          <select aria-label="单位" className="w-14 appearance-none bg-transparent pl-1 font-bold text-white outline-none"><option>小数</option></select>
          <Caret />
        </Cell>
        <Cell width="w-[26px]" items={['props']} />
        <Cell width="w-[41px]" items={['lockUi', 'v']} />
        <Cell width="w-[146px]" items={['isolate', 'hardware', 'lines', 'fill', 'blue', 'list']} />
        <Cell width="w-[26px]">
          <button aria-label="图形性能">
            <Svg><circle cx="9" cy="9" r="8.500" fill="#1268c9" /><circle cx="9" cy="9" r="5.500" fill="none" stroke="#3d95f2" /><path d="m8 11 5-4" stroke="#0a3b75" strokeWidth="2" /></Svg>
          </button>
        </Cell>
        <div className="flex w-[50px] shrink-0 items-center justify-around">
          {['clean', 'menu'].map((n) => <button key={n} aria-label={n}><Svg size={16} box={18}>{st[n]}</Svg></button>)}
        </div>
      </div>
    </footer>
  )
}

function Watermark() {
  return (
    <svg className="pointer-events-none absolute right-[74px] bottom-7 z-20 opacity-80 drop-shadow-[0_0_1px_#999]" width="264" height="128" fill="#f2f2f2" aria-hidden="true">
      <text x="1" y="82" fontSize="58" fontWeight="700" className="font-['Liberation_Sans',sans-serif]">Bai</text>
      <ellipse cx="100" cy="33" rx="9" ry="12" />
      <ellipse cx="118" cy="15" rx="9" ry="12.500" />
      <ellipse cx="141" cy="17" rx="9.500" ry="12" />
      <ellipse cx="155" cy="39" rx="9.500" ry="11.500" />
      <path d="M127 35c10 0 14 11 22 19 9 9 13 15 8 23-4 7-12 8-20 6-6-1-14-1-20 0-9 2-19-1-21-10-2-8 4-13 10-19 8-8 11-19 21-19z" />
      <text x="127" y="72" fontSize="34" fontWeight="700" textAnchor="middle" fill="#f2f2f2" stroke="#aaa" strokeWidth="1.500" className="font-['Liberation_Sans',sans-serif]">du</text>
      <text x="166" y="77" fontSize="44" fontWeight="900" className="font-['Noto_Sans_CJK_SC',sans-serif]">经验</text>
      <text x="4" y="116" fontSize="29" className="font-['Noto_Sans',sans-serif]">jingyan.baidu.com</text>
    </svg>
  )
}

export default function App() {
  return (
    <div className="relative flex h-screen flex-col overflow-hidden bg-linear-to-b from-[#1d2735] from-4% via-[#dbe7f4] via-15% to-[#a9c6e6] to-28% px-2 pb-2 font-['Open_Sans','Noto_Sans_CJK_SC',sans-serif] text-[12px] leading-4">
      <div className="-mx-2 bg-linear-to-b from-[#44576e] to-[#27364a] px-2"><TitleBar /></div>
      <button aria-label="应用程序菜单" className="absolute top-2 left-2 z-10 flex h-[41px] w-[41px] items-center gap-0.5 border border-[#222] bg-linear-to-b from-[#cfcfcf] to-[#6c6c6c] pl-0.5">
        <svg width="27" height="32" aria-hidden="true">
          <path d="M10 1h7l8 26-6 1-2-7-8 1-3 6-6-1z" fill="#cf2a2e" />
          <path d="m13 8 3 9-6 1z" fill="#c4b4b2" />
          <path d="M10 1 7 14M2 26l6-6 13-2M17 1l3 11" stroke="#8e1419" strokeWidth="1.500" fill="none" />
        </svg>
        <i className="border-x-4 border-t-4 border-x-transparent border-t-[#222]" />
      </button>
      <RibbonTabs />
      <Ribbon />
      <DocTabs />
      <div className="flex min-h-0 flex-1">
        <Palette />
        <main className="flex min-w-0 flex-1 flex-col">
          <Canvas />
          <CommandLine />
        </main>
      </div>
      <LayoutTabs />
      <StatusBar />
      <Watermark />
    </div>
  )
}
